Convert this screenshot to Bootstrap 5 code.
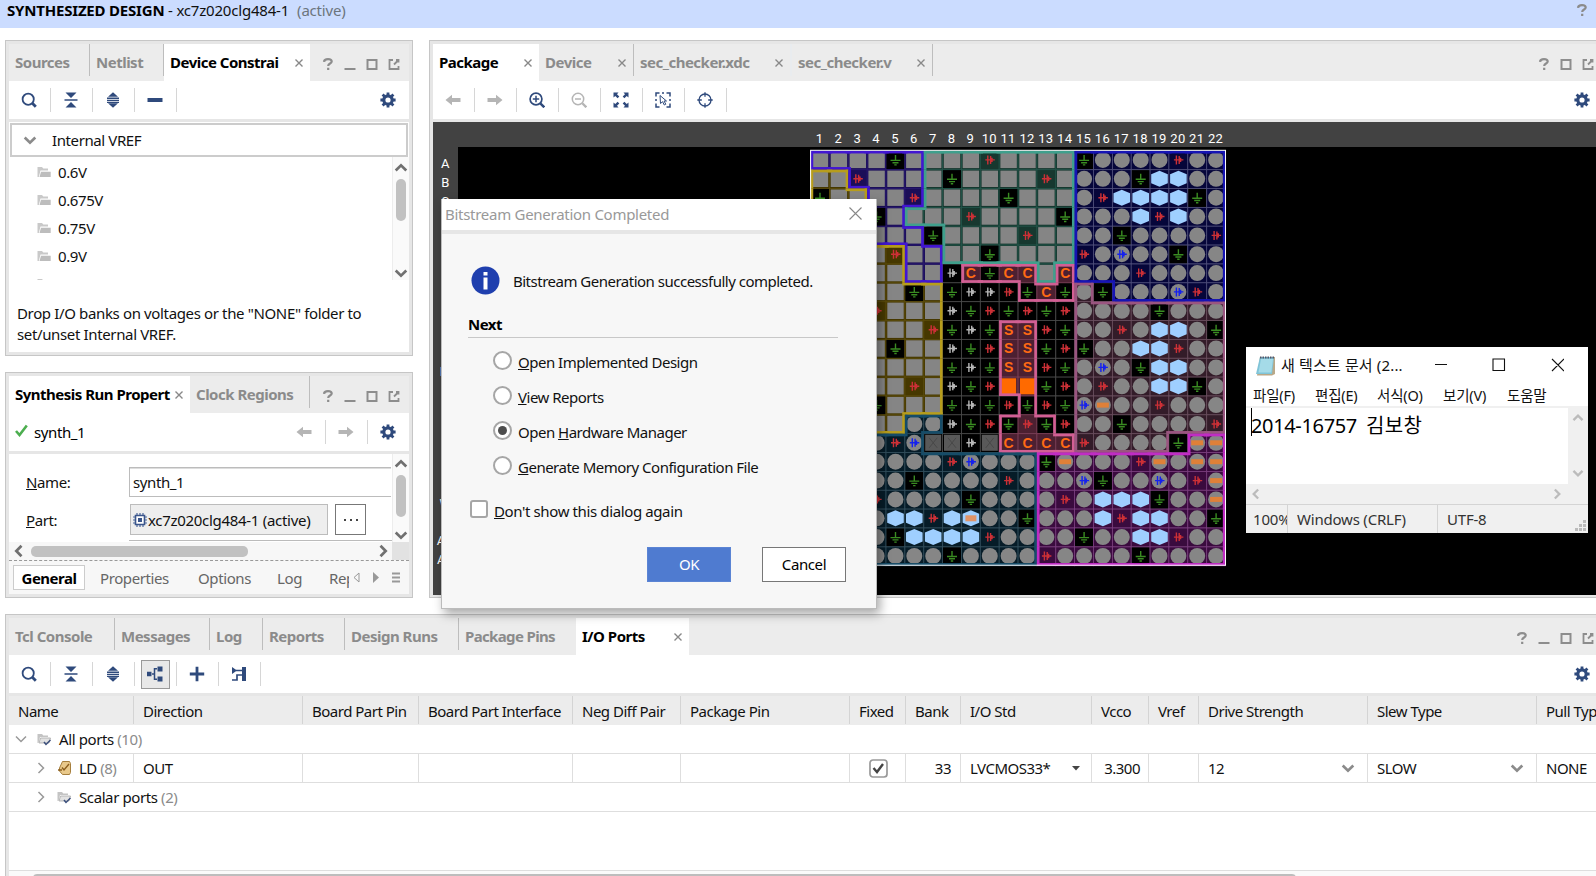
<!DOCTYPE html>
<html lang="en">
<head>
<meta charset="utf-8">
<title>Synthesized Design</title>
<link href="https://cdn.jsdelivr.net/npm/bootstrap@5.3.0/dist/css/bootstrap.min.css" rel="stylesheet">
<style>
  body{width:1596px;height:876px;overflow:hidden;position:relative;background:#fff;color:#111;font:15px/20px "Noto Sans","Noto Sans CJK KR",sans-serif;letter-spacing:-.4px;white-space:nowrap}
  svg{display:block;flex:none}
  .titleband{height:28px;background:#cbdcff;padding:0 6px 9px 7px;letter-spacing:-.2px}
  .workspace{height:576px;padding:12px 0 0 5px;gap:16px}
  .leftcol{width:408px;gap:16px}
  .pane{border:1px solid #c6c6c6;background:#e6e6e6;padding:3px}
  .tabs{height:37px;background:#ececec;display:grid;align-items:stretch}
  .tb{font-weight:700;color:#8b8b8b;letter-spacing:-.5px;padding:0 6px;display:flex;align-items:center;justify-content:space-between;border-right:1px solid #bdbdbd;margin-bottom:5px;padding-top:4px;overflow:hidden}
  .tb.on{background:#fff;color:#000;border:0;margin:0;padding-bottom:5px}
  .tb.nb{border:0}
  .tb svg{color:#888;margin-top:2px}
  .tools{height:38px;background:#fff;align-items:center;color:#2f4a7c}
  .tools>.tl{width:42px;height:24px;padding-right:1px;border-right:1px solid #d6d6d6;display:flex;align-items:center;justify-content:center}
  .wbtn{color:#8d8d8d;gap:6px;padding-top:3px}
  .wl{padding-left:10px}
  .off{color:#b5b5b5!important}
  .body-w{background:#fff;margin-top:3px}
  .vref{height:34px;border:2px solid #ccc;margin:1px 1px 0;padding-left:11px}
  .node{height:28px;padding-left:28px;gap:7px}
  .vs{width:17px;background:#fafafa;border-left:1px solid #ededed;color:#707070}
  .thumbv{width:10px;height:42px;border-radius:5px;background:#c1c1c1}
  .gray{color:#8b8b8b}
  .fld{border:1px solid #bcbcbc;border-right:0;height:30px;width:262px;padding-left:3px;box-shadow:inset 0 1px #ddd}
  .part{border:1px solid #bcbcbc;background:#eee;height:31px;width:198px;padding-left:2px;letter-spacing:-.3px}
  .dots{border:1px solid #777;width:31px;height:31px;background:#fff}
  .subtabs{height:34px;border-top:1px dashed #999;background:#f7f7f7;color:#666}
  .subtabs .sel{border:1px solid #ccc;background:#fff;color:#000;font-weight:700;letter-spacing:-.5px;height:25px;width:72px}
  .canvas{height:473px;background:#000;border-top:25px solid #424242;border-left:25px solid #424242;margin-top:3px;position:relative}
  .io{margin-left:5px;height:275px}
  .gridrow{display:grid;grid-template-columns:125px 169px 116px 154px 108px 169px 56px 55px 131px 57px 50px 169px 169px 90px;height:29px;border-bottom:1px solid #dedede;letter-spacing:-.5px}
  .gridrow>div{border-right:1px solid #dedede;padding-left:9px;display:flex;align-items:center;overflow:hidden}
  .headrow{background:#ececec;border-color:#ececec}
  .headrow>div{border-color:#d4d4d4;padding-top:2px}
  .treerow{height:29px;border-bottom:1px solid #dedede}
  .dlg{position:absolute;left:441px;top:199px;width:436px;height:410px;background:#f7f7f7;border:1px solid #bbb;border-top:0;box-shadow:3px 5px 10px rgba(0,0,0,.35);letter-spacing:-.5px}
  .dlg-title{height:35px;background:#fff;border-bottom:4px solid #e6e6e6;color:#999;padding:0 14px 2px 3px;letter-spacing:-.28px}
  .rad{width:19px;height:19px;border:2px solid #a6a6a6;border-radius:50%;background:#fff;display:flex;align-items:center;justify-content:center}
  .rad.sel::after{content:"";width:9px;height:9px;border-radius:50%;background:#4d4d4d}
  .opt{height:35px;gap:6px}
  .opt .rad{margin-bottom:2px}
  .chk{width:18px;height:18px;border:2px solid #a6a6a6;border-radius:3px;background:#fff}
  .push{width:84px;height:35px;border-radius:0;font-size:15px;letter-spacing:-.4px;padding:0;line-height:33px}
  .push.ok{background:#4f7bd0;color:#fff;border:1px solid #5b84d4}
  .push.no{background:#fff;color:#000;border:1px solid #777}
  .note{position:absolute;left:1246px;top:347px;width:342px;height:186px;background:#fff;letter-spacing:-.2px}
  .note .status{height:29px;background:#f0f0f0;border-top:1px solid #d4d4d4;color:#333}
  .note .status>div{border-right:1px solid #d4d4d4;overflow:hidden;display:flex;align-items:center}
  .sb{background:#f0f0f0;color:#bbb}
  .memo{font-size:20px;letter-spacing:-.35px;line-height:35px}
</style>
</head>
<body>
<svg width="0" height="0" class="position-absolute">
  <defs>
    <symbol id="x" viewBox="0 0 10 10"><path d="M1.5 1.5l7 7M8.5 1.5l-7 7" stroke="currentColor" stroke-width="1.4" fill="none"/></symbol>
    <symbol id="q" viewBox="0 0 16 16"><path d="M4 5.800C4.200 3.600 5.800 3.100 8 3.100c2.300 0 3.700.9 3.700 2.400 0 2-3.500 2-3.500 4.400M8.200 11.800v2.200" stroke="currentColor" stroke-width="2.200" fill="none"/></symbol>
    <symbol id="min" viewBox="0 0 16 16"><path d="M2.500 13h11" stroke="currentColor" stroke-width="2"/></symbol>
    <symbol id="max" viewBox="0 0 16 16"><path d="M3.500 4h9v9h-9z" stroke="currentColor" stroke-width="2" fill="none"/></symbol>
    <symbol id="ext" viewBox="0 0 16 16"><path d="M7 4H3.500V13h9V10M8 8.500L12 4.500M10 4h2.500V6.500" stroke="currentColor" stroke-width="1.800" fill="none"/></symbol>
    <symbol id="find" viewBox="0 0 16 16"><circle cx="7.200" cy="7.200" r="5.600" fill="none" stroke="currentColor" stroke-width="1.800"/><path d="M11.300 11.300l3.500 3.500" stroke="currentColor" stroke-width="2.800"/></symbol>
    <symbol id="coll" viewBox="0 0 16 16"><path d="M2.500 .5h11L8 6zM2.500 15.500h11L8 10zM1.500 7.200h13v1.600h-13z" fill="currentColor"/></symbol>
    <symbol id="expd" viewBox="0 0 16 16"><path d="M8 .3l5 4.400H3zM8 15.700l5-4.400H3zM2 5.500h12v1.400H2zM2 7.700h12v1.300H2zM2 9.700h12v1.200H2z" fill="currentColor"/></symbol>
    <symbol id="minus" viewBox="0 0 16 16"><path d="M.5 6h15v4H.5z" fill="currentColor"/></symbol>
    <symbol id="plus" viewBox="0 0 16 16"><path d="M8 .8v14.400M.8 8h14.400" stroke="currentColor" stroke-width="2.800"/></symbol>
    <symbol id="gear" viewBox="0 0 16 16"><circle cx="8" cy="8" r="4.200" fill="none" stroke="currentColor" stroke-width="3.200"/><path d="M8 .4v3M8 12.600v3M.4 8h3M12.600 8h3M2.600 2.600l2 2M11.400 11.400l2 2M2.600 13.400l2-2M11.400 4.600l2-2" stroke="currentColor" stroke-width="2.800"/></symbol>
    <symbol id="back" viewBox="0 0 16 16"><path d="M.5 8L7 2.700V6h8.500v4H7v3.300z" fill="currentColor"/></symbol>
    <symbol id="fwd" viewBox="0 0 16 16"><path d="M15.500 8L9 2.700V6H.5v4H9v3.300z" fill="currentColor"/></symbol>
    <symbol id="zin" viewBox="0 0 16 16"><circle cx="7" cy="7" r="5.900" fill="none" stroke="currentColor" stroke-width="1.700"/><path d="M11.300 11.300l4 4" stroke="currentColor" stroke-width="2.500"/><path d="M3.800 7h6.400M7 3.800v6.400" stroke="currentColor" stroke-width="1.500"/></symbol>
    <symbol id="zout" viewBox="0 0 16 16"><circle cx="7" cy="7" r="5.700" fill="none" stroke="currentColor" stroke-width="1.500"/><path d="M11.300 11.300l4 4" stroke="currentColor" stroke-width="2.300"/><path d="M4 7h6" stroke="currentColor" stroke-width="1.500"/></symbol>
    <symbol id="fit" viewBox="0 0 16 16"><path d="M.5.500h5L4 2.300l2.300 2.300-1.700 1.700L2.300 4 .5 5.500zM15.500.500h-5L12 2.300 9.700 4.600l1.700 1.700L13.700 4l1.800 1.500zM.5 15.500h5L4 13.700l2.300-2.300-1.700-1.700L2.300 12 .5 10.500zM15.500 15.500h-5l1.500-1.800-2.300-2.300 1.700-1.700 2.300 2.300 1.800-1.500z" fill="currentColor"/></symbol>
    <symbol id="selr" viewBox="0 0 16 16"><path d="M4.500 1H1v3.500M11.500 1H15v3.500M1 11.500V15h3.500M15 11.500V15h-3.500M7 1h2M1 7v2M15 7v2" stroke="currentColor" stroke-width="1.500" fill="none"/><path d="M5 3.500l6.500 5.500H9l1.800 3.200-1.500.8-1.700-3.300L5.500 11.500z" stroke="currentColor" stroke-width="1" fill="#fff"/></symbol>
    <symbol id="tgt" viewBox="0 0 16 16"><circle cx="8" cy="8" r="6" fill="none" stroke="currentColor" stroke-width="1.300"/><path d="M8 .3v4.500M8 11.200v4.500M.3 8h4.500M11.200 8h4.500" stroke="currentColor" stroke-width="1.300"/></symbol>
    <symbol id="hier" viewBox="0 0 16 16"><path d="M0 5.800h4.500v4.500H0zM10.500.500h5v5h-5zM10.500 10.500h5v5h-5z" fill="currentColor"/><path d="M5 8h3M10 2.800H7.500v10.500H10" stroke="currentColor" stroke-width="1.500" fill="none"/></symbol>
    <symbol id="sched" viewBox="0 0 16 16"><path d="M1 1l5 3.500L1 8zM11 1h4v14h-4z" fill="currentColor"/><path d="M5 4.500h6M1 14h5V9h5" stroke="currentColor" stroke-width="1.700" fill="none"/></symbol>
    <symbol id="dn" viewBox="0 0 14 14"><path d="M1.700 4.500L7 9.700l5.300-5.200" stroke="currentColor" stroke-width="2.700" fill="none"/></symbol>
    <symbol id="up" viewBox="0 0 14 14"><path d="M1.700 9.500L7 4.300l5.300 5.200" stroke="currentColor" stroke-width="2.700" fill="none"/></symbol>
    <symbol id="lt" viewBox="0 0 14 14"><path d="M9.500 1.700L4.300 7l5.200 5.300" stroke="currentColor" stroke-width="2.700" fill="none"/></symbol>
    <symbol id="rt" viewBox="0 0 14 14"><path d="M4.500 1.700L9.700 7l-5.200 5.300" stroke="currentColor" stroke-width="2.700" fill="none"/></symbol>
    <symbol id="thinr" viewBox="0 0 14 14"><path d="M4.500 2l5 5-5 5" stroke="#999" stroke-width="1.500" fill="none"/></symbol>
    <symbol id="thind" viewBox="0 0 14 14"><path d="M2 4.500l5 5 5-5" stroke="#999" stroke-width="1.500" fill="none"/></symbol>
    <symbol id="fold" viewBox="0 0 14 12"><path d="M.5 11V1h4.500l1.300 1.500H11V4.500H3.500L1.800 11z" fill="#c9c9c9"/><path d="M4 5.700h9.700v5.300H2.500z" fill="#bdbdbd"/></symbol>
    <symbol id="foldc" viewBox="0 0 14 13"><path d="M.5 10V1h4.500l1.300 1.500H11V4H3L1.500 10z" fill="#c4c4c4"/><path d="M3.500 5h10L12 10H2z" fill="#e2e2e2" stroke="#aaa" stroke-width=".8"/><path d="M7 9l2 2.500L13.500 7" stroke="#3b4f7c" stroke-width="1.500" fill="none"/></symbol>
  </defs>
</svg>

<header class="titleband d-flex align-items-center justify-content-between">
  <div><b class="text-black">SYNTHESIZED DESIGN</b> <span>- xc7z020clg484-1</span><span class="text-secondary ms-2">(active)</span></div>
  <svg width="16" height="16" class="gray"><use href="#q"/></svg>
</header>

<main class="workspace d-flex">
  <div class="leftcol d-flex flex-column">
    <section class="pane" id="constraints">
      <div class="tabs" style="grid-template-columns:81px 74px 146px 1fr">
        <div class="tb">Sources</div><div class="tb">Netlist</div>
        <div class="tb on">Device Constrai<svg width="10" height="10"><use href="#x"/></svg></div>
        <div class="wbtn wl d-flex align-items-center"><svg width="16" height="16"><use href="#q"/></svg><svg width="16" height="16"><use href="#min"/></svg><svg width="16" height="16"><use href="#max"/></svg><svg width="16" height="16"><use href="#ext"/></svg></div>
      </div>
      <div class="tools d-flex">
        <div class="tl"><svg width="16" height="16"><use href="#find"/></svg></div><div class="tl"><svg width="16" height="16"><use href="#coll"/></svg></div><div class="tl"><svg width="16" height="16"><use href="#expd"/></svg></div><div class="tl"><svg width="16" height="16"><use href="#minus"/></svg></div>
        <svg width="16" height="16" class="ms-auto" style="margin-right:13px"><use href="#gear"/></svg>
      </div>
      <div class="body-w" style="height:230px">
        <div class="d-flex flex-column">
          <div class="vref d-flex align-items-center"><svg width="14" height="14" class="gray" style="margin-right:15px"><use href="#dn"/></svg>Internal VREF</div>
        </div>
        <div class="d-flex overflow-hidden" style="height:123px">
          <div class="flex-fill" style="padding-top:1px">
            <div class="node d-flex align-items-center"><svg width="14" height="12"><use href="#fold"/></svg>0.6V</div>
            <div class="node d-flex align-items-center"><svg width="14" height="12"><use href="#fold"/></svg>0.675V</div>
            <div class="node d-flex align-items-center"><svg width="14" height="12"><use href="#fold"/></svg>0.75V</div>
            <div class="node d-flex align-items-center"><svg width="14" height="12"><use href="#fold"/></svg>0.9V</div>
            <div class="node d-flex align-items-center"><svg width="14" height="12"><use href="#fold"/></svg><span>NONE <span class="gray">(4)</span></span></div>
          </div>
          <div class="vs d-flex flex-column align-items-center pt-1"><svg width="14" height="14"><use href="#up"/></svg><div class="thumbv mt-1"></div><svg width="14" height="14" class="mt-auto"><use href="#dn"/></svg></div>
        </div>
        <div style="padding:23px 8px 0;line-height:21px;letter-spacing:-.36px">Drop I/O banks on voltages or the "NONE" folder to<br>set/unset Internal VREF.</div>
      </div>
    </section>

    <section class="pane" id="runprops">
      <div class="tabs" style="grid-template-columns:181px 120px 1fr">
        <div class="tb on">Synthesis Run Propert<svg width="10" height="10"><use href="#x"/></svg></div><div class="tb">Clock Regions</div>
        <div class="wbtn wl d-flex align-items-center"><svg width="16" height="16"><use href="#q"/></svg><svg width="16" height="16"><use href="#min"/></svg><svg width="16" height="16"><use href="#max"/></svg><svg width="16" height="16"><use href="#ext"/></svg></div>
      </div>
      <div class="tools d-flex">
        <svg width="13" height="13" viewBox="0 0 13 13" style="margin:0 6px 4px"><path d="M1 7l3.500 4L11.800 1.500" stroke="#4cae4f" stroke-width="2.600" fill="none"/></svg><span class="text-black">synth_1</span>
        <div class="tl off ms-auto"><svg width="16" height="16"><use href="#back"/></svg></div><div class="tl off"><svg width="16" height="16"><use href="#fwd"/></svg></div>
        <div class="tl border-0" style="width:41px"><svg width="16" height="16"><use href="#gear"/></svg></div>
      </div>
      <div class="body-w d-flex overflow-hidden" style="height:88px">
        <div class="flex-fill overflow-hidden">
          <div class="d-flex align-items-center" style="padding:13px 0 0 17px"><span style="width:103px"><u>N</u>ame:</span><div class="fld d-flex align-items-center">synth_1</div></div>
          <div class="d-flex align-items-center" style="padding:7px 0 0 17px"><span style="width:104px"><u>P</u>art:</span>
            <div class="part d-flex align-items-center"><svg width="14" height="14" viewBox="0 0 14 14" style="margin-right:1px"><path d="M4 0v14M7 0v14M10 0v14M0 4h14M0 7h14M0 10h14" stroke="#4d689c" stroke-width="1.200"/><path d="M2.500 2.500h9v9h-9z" fill="#fff" stroke="#3b568c" stroke-width="1.600"/><path d="M5 5h4v4H5z" fill="#3b568c"/></svg>xc7z020clg484-1 (active)</div>
            <div class="dots d-flex align-items-center justify-content-center" style="margin-left:7px"><svg width="16" height="4"><path d="M1 2h2M7 2h2M13 2h2" stroke="#444" stroke-width="2"/></svg></div></div>
          <div style="margin:5px 0 0 120px;border-top:1px solid #bbb"></div>
        </div>
        <div class="vs d-flex flex-column align-items-center" style="padding-top:3px"><svg width="14" height="14"><use href="#up"/></svg><div class="thumbv mt-1"></div><svg width="14" height="14" class="mt-auto"><use href="#dn"/></svg></div>
      </div>
      <div class="d-flex align-items-center" style="height:18px;background:#f7f7f7;color:#707070"><svg width="14" height="14" style="margin-left:3px"><use href="#lt"/></svg><div style="width:217px;height:11px;border-radius:5px;background:#c1c1c1;margin-left:5px"></div><svg width="14" height="14" class="ms-auto" style="margin-right:2px"><use href="#rt"/></svg><div style="width:17px;height:18px;background:#e2e2e2"></div></div>
      <div class="subtabs d-flex align-items-center">
        <div class="sel d-flex align-items-center justify-content-center ms-1">General</div>
        <span style="margin-left:15px;width:98px">Properties</span><span style="width:79px">Options</span><span style="width:52px">Log</span><span class="overflow-hidden" style="width:20px">Reports</span>
        <svg width="50" height="14" viewBox="0 0 50 14" style="margin-left:4px"><path d="M6 2v9L1 6.500z" fill="none" stroke="#999"/><path d="M20 1v11l6-5.500z" fill="#999"/><path d="M39 2.500h8M39 6.500h8M39 10.500h8" stroke="#999" stroke-width="2"/></svg>
      </div>
    </section>
  </div>

  <section class="pane flex-fill border-end-0 pe-0" id="package" style="height:558px">
    <div class="tabs" style="grid-template-columns:106px 95px 158px 141px 1fr">
      <div class="tb on">Package<svg width="10" height="10"><use href="#x"/></svg></div>
      <div class="tb">Device<svg width="10" height="10"><use href="#x"/></svg></div>
      <div class="tb border-end border-2 border-secondary-subtle">sec_checker.xdc<svg width="10" height="10"><use href="#x"/></svg></div>
      <div class="tb">sec_checker.v<svg width="10" height="10"><use href="#x"/></svg></div>
      <div class="wbtn d-flex align-items-center justify-content-end"><svg width="16" height="16"><use href="#q"/></svg><svg width="16" height="16"><use href="#max"/></svg><svg width="16" height="16"><use href="#ext"/></svg></div>
    </div>
    <div class="tools d-flex">
      <div class="tl off"><svg width="16" height="16"><use href="#back"/></svg></div><div class="tl off"><svg width="16" height="16"><use href="#fwd"/></svg></div><div class="tl"><svg width="16" height="16"><use href="#zin"/></svg></div><div class="tl off"><svg width="16" height="16"><use href="#zout"/></svg></div><div class="tl"><svg width="16" height="16"><use href="#fit"/></svg></div><div class="tl"><svg width="16" height="16"><use href="#selr"/></svg></div><div class="tl"><svg width="16" height="16"><use href="#tgt"/></svg></div>
      <svg width="16" height="16" class="ms-auto" style="margin-right:6px"><use href="#gear"/></svg>
    </div>
    <div class="canvas"><svg id="map" width="1163" height="473" viewBox="433 122 1163 473" class="position-absolute" style="left:-25px;top:-25px"></svg></div>
  </section>
</main>

<section class="pane io border-end-0 pe-0" style="margin-top:10px">
  <div class="tabs" style="grid-template-columns:106px 95px 53px 82px 114px 117px 113px 1fr">
    <div class="tb">Tcl Console</div><div class="tb">Messages</div><div class="tb">Log</div><div class="tb">Reports</div><div class="tb">Design Runs</div><div class="tb nb" style="letter-spacing:-.65px">Package Pins</div><div class="tb on">I/O Ports<svg width="10" height="10"><use href="#x"/></svg></div>
    <div class="wbtn d-flex align-items-center justify-content-end"><svg width="16" height="16"><use href="#q"/></svg><svg width="16" height="16"><use href="#min"/></svg><svg width="16" height="16"><use href="#max"/></svg><svg width="16" height="16"><use href="#ext"/></svg></div>
  </div>
  <div class="tools d-flex">
    <div class="tl"><svg width="16" height="16"><use href="#find"/></svg></div><div class="tl"><svg width="16" height="16"><use href="#coll"/></svg></div><div class="tl"><svg width="16" height="16"><use href="#expd"/></svg></div>
    <div class="tl"><div class="d-flex align-items-center justify-content-center flex-shrink-0" style="width:29px;height:29px;background:#e8e8e8;border:1px solid #999"><svg width="16" height="16"><use href="#hier"/></svg></div></div>
    <div class="tl"><svg width="16" height="16"><use href="#plus"/></svg></div><div class="tl"><svg width="16" height="16"><use href="#sched"/></svg></div>
    <svg width="16" height="16" class="ms-auto" style="margin-right:6px"><use href="#gear"/></svg>
  </div>
  <div class="body-w overflow-hidden" style="height:181px">
    <div class="gridrow headrow"><div>Name</div><div>Direction</div><div>Board Part Pin</div><div>Board Part Interface</div><div>Neg Diff Pair</div><div>Package Pin</div><div>Fixed</div><div>Bank</div><div>I/O Std</div><div>Vcco</div><div>Vref</div><div>Drive Strength</div><div>Slew Type</div><div>Pull Type</div></div>
    <div class="treerow d-flex align-items-center" style="padding-left:5px"><svg width="14" height="14"><use href="#thind"/></svg><svg width="14" height="13" style="margin:0 8px 0 9px"><use href="#foldc"/></svg>All ports&nbsp;<span class="gray">(10)</span></div>
    <div class="gridrow"><div style="padding-left:25px"><svg width="14" height="14"><use href="#thinr"/></svg><svg width="13" height="16" viewBox="0 0 13 16" style="margin:0 8px 0 10px"><path d="M4.500 1.500h7l1 2v9l-1 2h-7L1.500 11V8z" fill="#e9c98b" stroke="#a67f3d"/><path d="M0 10h4M4 7.500l2 2.500 5-6" stroke="#8c5f1e" stroke-width="1.400" fill="none"/></svg>LD&nbsp;<span class="gray">(8)</span></div><div>OUT</div><div></div><div></div><div></div><div></div>
      <div style="padding-left:19px"><svg width="19" height="19" viewBox="0 0 19 19"><rect x="1" y="1" width="17" height="17" rx="3" fill="#fff" stroke="#999" stroke-width="1.700"/><path d="M4.500 9l3.500 4L14 5" stroke="#444" stroke-width="2.400" fill="none"/></svg></div>
      <div class="justify-content-end" style="padding-right:9px">33</div><div>LVCMOS33*<svg width="8" height="5" class="ms-auto" style="margin-right:11px"><path d="M0 0h8L4 4.500z" fill="#444"/></svg></div><div class="justify-content-end p-0 pe-2">3.300</div><div></div>
      <div>12<svg width="14" height="14" class="ms-auto gray" style="margin-right:12px"><use href="#dn"/></svg></div><div>SLOW<svg width="14" height="14" class="ms-auto gray" style="margin-right:12px"><use href="#dn"/></svg></div><div>NONE</div></div>
    <div class="treerow d-flex align-items-center" style="padding-left:25px"><svg width="14" height="14"><use href="#thinr"/></svg><svg width="14" height="13" style="margin:0 8px 0 9px"><use href="#foldc"/></svg>Scalar ports&nbsp;<span class="gray">(2)</span></div>
    <div style="height:58px"></div>
    <div style="height:8px;border-top:1px solid #dedede;padding:3px 0 0 24px;background:#fafafa"><div style="width:1263px;height:9px;border-radius:4px;background:#bdbdbd"></div></div>
  </div>
</section>

<div class="dlg">
  <div class="dlg-title d-flex align-items-center justify-content-between"><span>Bitstream Generation Completed</span><svg width="13" height="13" viewBox="0 0 13 13"><path d="M.5.500l12 12M12.500.500l-12 12" stroke="#888" stroke-width="1.100"/></svg></div>
  <div style="padding:32px 0 0 26px">
    <div class="d-flex align-items-center" style="height:29px;padding-left:3px"><svg width="29" height="29" viewBox="0 0 29 29"><circle cx="14.500" cy="14.500" r="14" fill="#1f3fae"/><path d="M12.500 6h4v3.500h-4zM12.500 11.500h4v12h-4z" fill="#fff"/></svg><span style="margin-left:13px">Bitstream Generation successfully completed.</span></div>
    <div class="text-black fw-bold" style="margin-top:19px;height:24px;width:370px;border-bottom:1px solid #c8c8c8">Next</div>
    <div style="padding:6px 0 0 25px">
      <div class="opt d-flex align-items-center"><span class="rad"></span><span><u>O</u>pen Implemented Design</span></div>
      <div class="opt d-flex align-items-center"><span class="rad"></span><span><u>V</u>iew Reports</span></div>
      <div class="opt d-flex align-items-center"><span class="rad sel"></span><span>Open <u>H</u>ardware Manager</span></div>
      <div class="opt d-flex align-items-center"><span class="rad"></span><span><u>G</u>enerate Memory Configuration File</span></div>
    </div>
    <div class="d-flex align-items-center" style="padding:16px 0 0 2px;gap:6px"><span class="chk" style="margin-bottom:3px"></span><span style="letter-spacing:-.38px"><u>D</u>on't show this dialog again</span></div>
    <div class="d-flex" style="margin:26px 0 0 179px;gap:31px"><button class="btn push ok">OK</button><button class="btn push no">Cancel</button></div>
  </div>
</div>

<div class="note d-flex flex-column">
  <div class="d-flex align-items-center" style="height:36px;padding-left:10px">
    <svg width="19" height="21" viewBox="0 0 19 21"><path d="M4 2h15v17l-3 1.500H1z" fill="#b9a888"/><path d="M4 2h14l-2 17H0z" fill="#7fc4d8"/><path d="M5 4h12l-1.700 13.500H2.500z" fill="#a5dbe8"/><path d="M4 2.500h14" stroke="#556" stroke-width="2" stroke-dasharray="1.500 1"/></svg>
    <span style="width:157px;padding-left:6px;letter-spacing:.15px">새 텍스트 문서 (2...</span>
    <svg width="132" height="14" viewBox="0 0 132 14"><path d="M3 6.500h12M61 1h11.500v11.500H61zM120 1l12 12M132 1l-12 12" stroke="#111" stroke-width="1.100" fill="none"/></svg>
  </div>
  <div class="d-flex align-items-center" style="height:25px;padding-left:7px;border-bottom:2px solid #f0f0f0;font-size:14.500px"><span style="width:62px">파일(F)</span><span style="width:62px">편집(E)</span><span style="width:66px">서식(O)</span><span style="width:64px">보기(V)</span><span>도움말</span></div>
  <div class="d-flex flex-fill">
    <div class="memo flex-fill text-black d-flex" style="padding-left:5px"><span style="width:1px;height:28px;background:#000;margin-right:-1px"></span>2014-16757<span style="margin-left:9px;letter-spacing:.4px">김보창</span></div>
    <div class="sb d-flex flex-column justify-content-between align-items-center" style="width:20px;padding:4px 0 5px"><svg width="12" height="12"><use href="#up"/></svg><svg width="12" height="12"><use href="#dn"/></svg></div>
  </div>
  <div class="sb d-flex justify-content-between align-items-center" style="height:20px;padding:0 25px 0 4px"><svg width="12" height="12"><use href="#lt"/></svg><svg width="12" height="12"><use href="#rt"/></svg></div>
  <div class="status d-flex"><div style="width:42px;padding-left:7px">100%</div><div style="width:150px;padding-left:9px">Windows (CRLF)</div><div class="flex-fill border-0" style="padding-left:9px">UTF-8</div><svg width="14" height="14" class="align-self-end"><path d="M9 1h3v3H9zM5 5h3v3H5zM9 5h3v3H9zM1 9h3v3H1zM5 9h3v3H5zM9 9h3v3H9z" fill="#bbb"/></svg></div>
</div>

<script>
  // Package map: one letter per ball, and the I/O bank that each ball belongs to.
  const balls = [
    'qqqqgqqqqrqqqqgooooroo','qqrqqqqgqqqqrqoooghhoo','gqqqqrqqqqgqqqorhhhhgo','qqqgqqqqrqqqqgooohrhoo',
    'qqqqqqgqqqqrqqoogoooor','qqqqrqqqqgqqqqroboogoo','qqqqqqqwCgCCqCoooroooo','qqqqqgqgwwrgCgogooobro',
    'qqqrqqqwgrgrgroooogooo','qqqqqqrgwgSSrgoorohhog','qqqqgqqwgrSSgrgoohhroo','qqqqqqqgwgSSrgoboghhoo',
    'qqqqqrqwgrFFgroroohhgo','qqqgqqqgwgrgrgbdoorooo','qqqqqoowgrgrgroogoooor','oooorbxxwxCCCCroooogdd',
    'ooooooorbooogdooordodd','ooooogoooorooobgoobord','oooroooogoooorohhhgood','oooohhrheoogooohrhhoog',
    'ooooghhhhroooogoohhroo','ooooooogoooorooooogoooo'.slice(0,22)];
  balls[21] = 'ooooooogoooor' + 'oooog' + 'oooo';
  const banks = [
    'PPPPPPTTTTTTTTBBBBBBBB','YYPPPPTTTTTTTTBBBBBBBB','YYYPPPTTTTTTTTBBBBBBBB','YYYPPTTTTTTTTTBBBBBBBB',
    'YYYPPP.TTTTTTTBBBBBBBB','YYYYYPPTTTTTTTBBBBBBBB','YYYYYPP.KKKKTKBBBBBBBB','YYYYYYY....KKKM.BBBBBB',
    'YYYYYYY.......MMMMMMMM','YYYYYYY...KK..MMMMMMMM','YYYYYYY...KK..MMMMMMMM','YYYYYYY...KK..MMMMMMMM',
    'YYYYYYY...KK..MMMMMMMM','YYYYYYY....K..MMMMMMMM','YYYYYNN...KKK.MMMMMMMM','NNNNNN....KKKKMMMMM.GG',
    ...Array(6).fill('NNNNNNNNNNNNGGGGGGGGGG')];
  const tint = {P:'#1b0e58',Y:'#463800',T:'#17382f',B:'#06063a',M:'#331c29',K:'#4c2031',G:'#3a0b3e',N:'#061c28','.':'#000'};
  const edge = {P:'#4216d2',Y:'#b79d1c',T:'#3f9f8c',B:'#1614b4',M:'#9a5580',K:'#d25f94',G:'#c02cc4',N:'#164c68'};
  const line = {P:'#2a1a70',Y:'#5c4d0c',T:'#24564b',B:'#50507c',M:'#6c5060',K:'#7c4058',G:'#7c4080',N:'#34505e','.':'#4c4c4c'};
  const W = 18.86, X0 = 810.6, Y0 = 150.8;
  let s = '';
  const seg = (x1,y1,x2,y2,c,w) => `<path d="M${x1.toFixed(1)} ${y1.toFixed(1)}L${x2.toFixed(1)} ${y2.toFixed(1)}" stroke="${c}" stroke-width="${w}" fill="none"/>`;
  const power = (x,y,c) => `<path d="M${x-4.5} ${y}h9.500M${x-2} ${y-4.500}v9M${x+.8} ${y-4}v8M${x+2.200} ${y-2.200}v4.400" stroke="${c}" stroke-width="1.400" fill="none"/>`;
  s += `<rect x="${X0}" y="${Y0}" width="${W*22}" height="${W*22}" fill="#000"/>`;
  for (let r=0;r<22;r++) for (let c=0;c<22;c++) {
    const t=balls[r][c], b=banks[r][c], l=X0+c*W, u=Y0+r*W, x=+(l+W/2).toFixed(1), y=+(u+W/2-.3).toFixed(1);
    s += `<rect x="${l.toFixed(1)}" y="${u.toFixed(1)}" width="${W}" height="${W}" fill="${t=='g'?'#000':tint[b]}" stroke="${line[b]}" stroke-width=".8"/>`;
    if (t=='q') s += `<rect x="${x-8.200}" y="${y-8.200}" width="16.400" height="16.400" fill="#858585"/>`;
    if ('obd'.includes(t)) s += `<circle cx="${x}" cy="${y}" r="8" fill="#868686"/>`;
    if ('he'.includes(t)) s += `<path d="M${x-8.300} ${y-4.500}L${x} ${y-8}l8.300 3.500v9L${x} ${y+8}l-8.300-3.500z" fill="#9fcfff"/>`;
    if (t=='g') s += `<path d="M${x} ${y-5}v6M${x-5} ${y+.5}h10M${x-3} ${y+2.800}h6M${x-1.200} ${y+5}h2.400" stroke="#3a8c22" stroke-width="1.400" fill="none"/>`;
    if (t=='r') s += power(x,y,'#cc3036');
    if (t=='w') s += power(x,y,'#b8b8b8');
    if (t=='b') s += power(x,y,'#1420ee');
    if (t=='d') s += `<rect x="${x-6}" y="${y-2.500}" width="12" height="5" fill="#df8038"/>`;
    if (t=='e') s += `<rect x="${x-5.500}" y="${y-3}" width="11" height="6" fill="#e09468"/>`;
    if (t=='F') s += `<rect x="${x-7.500}" y="${y-8}" width="15" height="16" fill="#ff6a00"/>`;
    if (t=='x') s += `<rect x="${x-8}" y="${y-8}" width="16" height="16" fill="#595959"/><path d="M${x-4} ${y-5}l8 10M${x+4} ${y-5}l-8 10" stroke="#484848"/>`;
    if (t=='C'||t=='S') s += `<text x="${x}" y="${y+4.800}" text-anchor="middle" font-family="Liberation Sans" font-weight="700" font-size="14" letter-spacing="0" fill="#ff6a14">${t}</text>`;
  }
  for (let r=0;r<22;r++) for (let c=0;c<22;c++) {
    const b=banks[r][c]; if (b=='.') continue;
    const k=edge[b], l=X0+c*W, u=Y0+r*W, R=l+W, D=u+W, at=(i,j)=>(banks[i]||'')[j];
    const T=at(r-1,c)!=b, B=at(r+1,c)!=b, L=at(r,c-1)!=b, Q=at(r,c+1)!=b;
    if (T) s += seg(L?l:l-2.700,u+1.300,Q?R:R+2.700,u+1.300,k,2.700);
    if (B) s += seg(L?l:l-2.700,D-1.300,Q?R:R+2.700,D-1.300,k,2.700);
    if (L) s += seg(l+1.300,u,l+1.300,D,k,2.700);
    if (Q) s += seg(R-1.300,u,R-1.300,D,k,2.700);
  }
  s += `<rect x="${X0}" y="${Y0-.500}" width="${W*22}" height="${W*22}" fill="none" stroke="#fff" stroke-width="1"/>`;
  const lab = (x,y,t) => `<text x="${x}" y="${y}" text-anchor="middle" font-family="Roboto" font-size="13" letter-spacing=".3" fill="#fff">${t}</text>`;
  for (let c=0;c<22;c++) s += lab((X0+(c+.5)*W-.5).toFixed(1),143,c+1);
  'A B C D E F G H J K L M N P R T U V W Y AA AB'.split(' ').forEach((t,r)=>{ s += lab(445.500,(Y0+(r+.5)*W+8).toFixed(1),t); });
  document.getElementById('map').innerHTML = s;
</script>
<script src="https://cdn.jsdelivr.net/npm/bootstrap@5.3.0/dist/js/bootstrap.bundle.min.js"></script>
</body>
</html>
